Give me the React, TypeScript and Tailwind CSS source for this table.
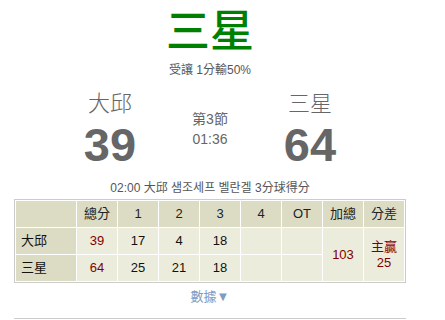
import React from "react";

const F = { fontFamily: '"Liberation Sans", "Noto Sans CJK TC", "Noto Sans CJK KR", sans-serif' };

export default function App() {
  const head = ["", "總分", "1", "2", "3", "4", "OT", "加總", "分差"];
  return (
    <div className="w-[445px] h-[320px] bg-white overflow-hidden" style={F}>
      <div className="ml-[14px] w-[392px] flex flex-col items-center">
        <div className="mt-[8px] text-[44px] leading-[48px] font-medium text-[#008000]">三星</div>
        <div className="mt-[7px] text-[12px] leading-[14px] text-[#555]">受讓 1分輸50%</div>
        <div className="mt-[14px] flex w-full">
          <div className="ml-[46px] w-[100px] flex flex-col items-center">
            <div className="text-[22px] leading-[26px] font-light text-[#666]">大邱</div>
            <div className="mt-[5px] text-[47px] leading-[46px] font-bold text-[#666]">39</div>
          </div>
          <div className="w-[100px] flex flex-col items-center pt-[18px] text-[14px] leading-[20px] text-[#666]">
            <div>第3節</div>
            <div>01:36</div>
          </div>
          <div className="w-[100px] flex flex-col items-center">
            <div className="text-[22px] leading-[26px] font-light text-[#666]">三星</div>
            <div className="mt-[5px] text-[47px] leading-[46px] font-bold text-[#666]">64</div>
          </div>
        </div>
        <div className="mt-[13px] text-[12px] leading-[14px] text-[#555]">02:00 大邱 샘조세프 벨란겔 3分球得分</div>
        <table className="mt-[4px] border border-[#cccccc] border-separate border-spacing-[1px] bg-white text-[13px]">
          <tbody>
            <tr className="h-[26px]">
              {head.map((h, i) => (
                <td key={i} className={`${i === 0 ? "w-[60px]" : "w-[40px]"} p-0 bg-[#dcdcc4] text-center text-[#222]`}>{h}</td>
              ))}
            </tr>
            <tr className="h-[26px]">
              <td className="p-0 pl-[5px] bg-[#dcdcc4] text-[#111]">大邱</td>
              <td className="p-0 bg-[#ececdc] text-center text-[#800000]">39</td>
              <td className="p-0 bg-[#ececdc] text-center text-[#111]">17</td>
              <td className="p-0 bg-[#ececdc] text-center text-[#111]">4</td>
              <td className="p-0 bg-[#ececdc] text-center text-[#111]">18</td>
              <td className="p-0 bg-[#ececdc]"></td>
              <td className="p-0 bg-[#ececdc]"></td>
              <td rowSpan={2} className="p-0 bg-[#ececdc] text-center text-[#800000]">103</td>
              <td rowSpan={2} className="p-0 bg-[#ececdc] text-center text-[#800000] leading-[16px]">主贏<br />25</td>
            </tr>
            <tr className="h-[26px]">
              <td className="p-0 pl-[5px] bg-[#dcdcc4] text-[#111]">三星</td>
              <td className="p-0 bg-[#ececdc] text-center text-[#800000]">64</td>
              <td className="p-0 bg-[#ececdc] text-center text-[#111]">25</td>
              <td className="p-0 bg-[#ececdc] text-center text-[#111]">21</td>
              <td className="p-0 bg-[#ececdc] text-center text-[#111]">18</td>
              <td className="p-0 bg-[#ececdc]"></td>
              <td className="p-0 bg-[#ececdc]"></td>
            </tr>
          </tbody>
        </table>
        <div className="mt-[5px] text-[13px] leading-[18px] text-[#7d9cc4]">數據▼</div>
        <div className="mt-[12px] w-full h-px bg-[#cccccc]"></div>
      </div>
    </div>
  );
}
